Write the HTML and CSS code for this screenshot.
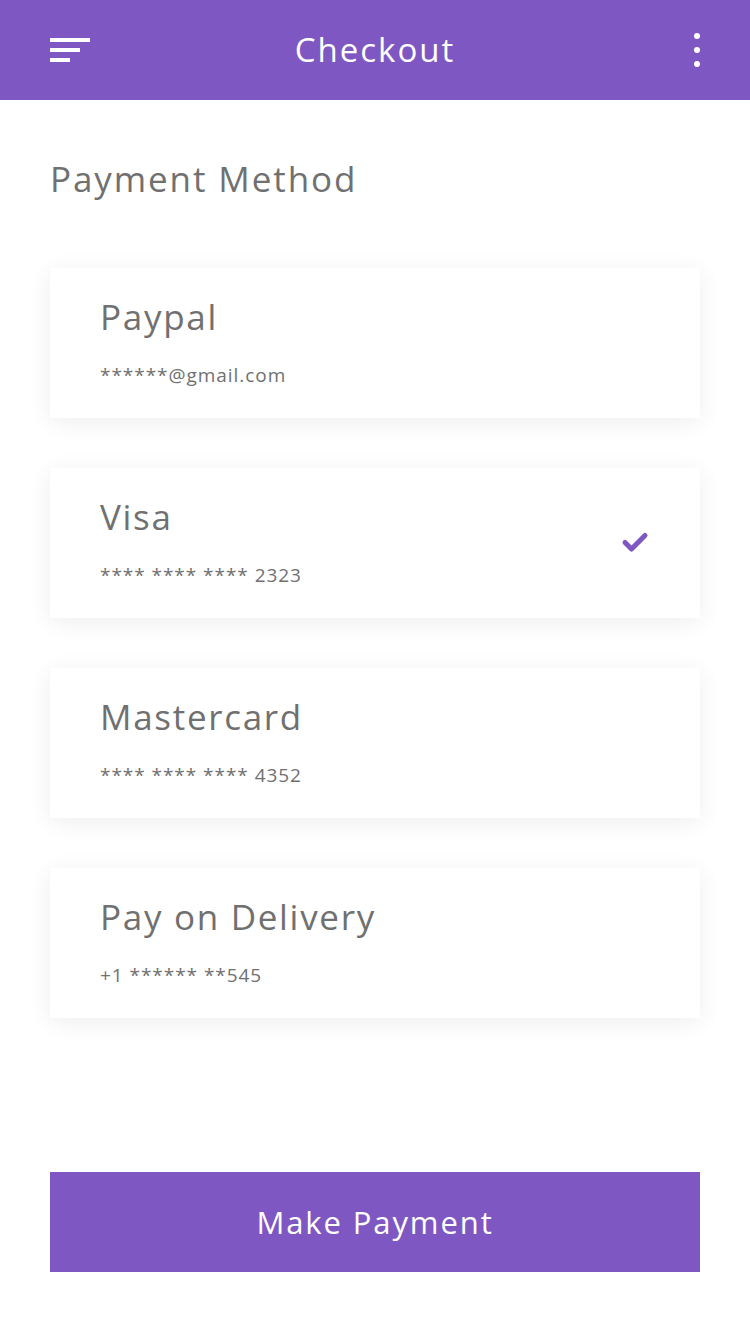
FILE: index.html
```html
<!DOCTYPE html>
<html>
<head>
<meta charset="utf-8">
<link rel="stylesheet" href="styles.css">
</head>
<body>
<div class="app">
  <header class="topbar">
    <div class="menu-icon">
      <span class="l1"></span><span class="l2"></span><span class="l3"></span>
    </div>
    <h1 class="title">Checkout</h1>
    <div class="more-icon"><span></span><span></span><span></span></div>
  </header>
  <main class="content">
    <h2 class="section-title">Payment Method</h2>
    <div class="cards">
      <div class="card">
        <div class="card-text">
          <div class="card-name">Paypal</div>
          <div class="card-detail">******@gmail.com</div>
        </div>
      </div>
      <div class="card">
        <div class="card-text">
          <div class="card-name">Visa</div>
          <div class="card-detail">**** **** **** 2323</div>
        </div>
        <svg class="check" width="28" height="22" viewBox="0 0 28 22"><path d="M4 11.5 L10.5 18 L24 4.5" fill="none" stroke="#7E57C2" stroke-width="5" stroke-linecap="round" stroke-linejoin="round"/></svg>
      </div>
      <div class="card">
        <div class="card-text">
          <div class="card-name">Mastercard</div>
          <div class="card-detail">**** **** **** 4352</div>
        </div>
      </div>
      <div class="card">
        <div class="card-text">
          <div class="card-name">Pay on Delivery</div>
          <div class="card-detail">+1 ****** **545</div>
        </div>
      </div>
    </div>
    <button class="pay-btn">Make Payment</button>
  </main>
</div>
</body>
</html>
```
FILE: styles.css
```css
* { box-sizing: border-box; }
html, body { margin: 0; padding: 0; background: #fff; }
body { font-family: "Open Sans", "Noto Sans", sans-serif; }
.app { width: 750px; height: 1334px; display: flex; flex-direction: column; }
.topbar {
  height: 100px; background: #7E57C2; display: flex; align-items: center;
  justify-content: space-between; padding: 0 50px; position: relative;
}
.menu-icon { width: 40px; display: flex; flex-direction: column; gap: 6px; }
.menu-icon span { display: block; height: 4px; background: #fff; }
.menu-icon .l1 { width: 40px; }
.menu-icon .l2 { width: 30px; }
.menu-icon .l3 { width: 20px; }
.title {
  margin: -2px 0 0 0; color: #fff; font-weight: 400; font-size: 33px; line-height: 45px; letter-spacing: 2px;
}
.more-icon { width: 40px; display: flex; flex-direction: column; align-items: flex-end; gap: 8px; }
.more-icon span { width: 6px; height: 6px; border-radius: 50%; background: #fff; }
.content { padding: 0 50px; display: flex; flex-direction: column; flex: 1; }
.section-title {
  margin: 0; padding-top: 56px; height: 168px; color: #707070; font-weight: 400; font-size: 35px; line-height: 46px; letter-spacing: 1.9px;
}
.cards { display: flex; flex-direction: column; gap: 50px; }
.card {
  height: 150px; background: #fff; box-shadow: 0 4px 22px rgba(0,0,0,0.07);
  display: flex; align-items: flex-start; justify-content: space-between; padding: 27px 50px 0 50px;
}
.card-text { display: flex; flex-direction: column; }
.card-name { color: #707070; font-size: 35px; line-height: 44px; letter-spacing: 1.7px; }
.card-detail { color: #707070; font-size: 19px; line-height: 24px; margin-top: 24px; letter-spacing: 0.95px; }
.check { margin-right: 1px; margin-top: 36px; }
.pay-btn {
  margin-top: auto; margin-bottom: 62px; height: 100px; width: 100%; border: 0; background: #7E57C2;
  color: #fff; font-family: inherit; font-size: 31px; font-weight: 400; letter-spacing: 1.9px;
}
```
